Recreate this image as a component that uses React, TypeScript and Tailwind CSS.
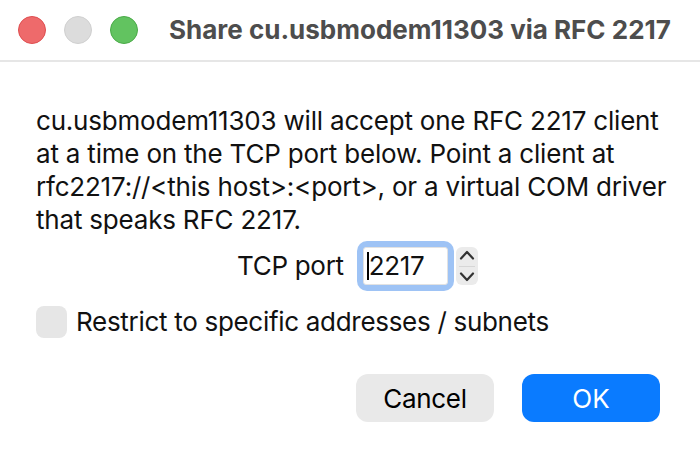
const font = { fontFamily: "Inter, 'Noto Sans', sans-serif" };

function Chevron({ up }: { up?: boolean }) {
  return (
    <svg width="16" height="10" viewBox="0 0 16 10" fill="none">
      <path
        d={up ? "M2 8.5 L8 2 L14 8.5" : "M2 1.5 L8 8 L14 1.5"}
        stroke="#333"
        strokeWidth="2.2"
        strokeLinecap="round"
        strokeLinejoin="round"
      />
    </svg>
  );
}

export default function App() {
  return (
    <div className="w-[700px] h-[456px] bg-white text-[#111] overflow-hidden" style={font}>
      {/* Title bar */}
      <div className="h-[62px] flex items-center pl-[18px] border-b-2 border-[#e6e6e6]">
        <div className="flex gap-[18px]">
          <span className="w-[28px] h-[28px] rounded-full bg-[#ee6a6b] border border-[#df4e50]" />
          <span className="w-[28px] h-[28px] rounded-full bg-[#dcdcdc] border border-[#d0d0d0]" />
          <span className="w-[28px] h-[28px] rounded-full bg-[#62c360] border border-[#4aab48]" />
        </div>
        <div className="ml-[31px] text-[26px] font-bold text-[#4d4d4d] leading-none whitespace-nowrap">
          Share cu.usbmodem11303 via RFC 2217
        </div>
      </div>

      {/* Body */}
      <div className="pl-[36px] pr-[40px]">
        <p className="mt-[42px] -mr-[30px] text-[26px] leading-[33px] tracking-[-0.2px] whitespace-nowrap">
          cu.usbmodem11303 will accept one RFC 2217 client
          <br />
          at a time on the TCP port below. Point a client at
          <br />
          rfc2217://&lt;this host&gt;:&lt;port&gt;, or a virtual COM driver
          <br />
          that speaks RFC 2217.
        </p>

        <div className="mt-[5px] h-[50px] flex items-center pl-[201px]">
          <span className="text-[26px] leading-none tracking-[-0.3px]">TCP port</span>
          <div className="ml-[13px] w-[97px] h-[50px] rounded-[10px] bg-[#9ec3f5] p-[6px]">
            <div className="h-full bg-white rounded-[3px] border border-[#e2e2e2] flex items-center pl-[3px]">
              <span className="w-[2px] h-[28px] bg-black" />
              <span className="text-[26px] leading-none tracking-[-0.3px]">2217</span>
            </div>
          </div>
          <div className="ml-[2px] w-[22px] h-[38px] rounded-[6px] bg-[#ebebeb] flex flex-col items-center justify-between py-[3px]">
            <Chevron up />
            <span className="w-[16px] h-px bg-[#d6d6d6]" />
            <Chevron />
          </div>
        </div>

        <div className="mt-[15px] flex items-center">
          <span className="w-[31px] h-[32px] rounded-[8px] bg-[#e6e6e6]" />
          <span className="ml-[9px] text-[26px] leading-none tracking-[-0.3px]">
            Restrict to specific addresses / subnets
          </span>
        </div>

        <div className="mt-[36px] flex justify-end gap-[28px]">
          <button className="w-[138px] h-[48px] rounded-[12px] bg-[#e9e9e9] text-[26px] text-black tracking-[-0.3px]">
            Cancel
          </button>
          <button className="w-[138px] h-[48px] rounded-[12px] bg-[#0a7bff] text-[26px] text-white">
            OK
          </button>
        </div>
      </div>
    </div>
  );
}
